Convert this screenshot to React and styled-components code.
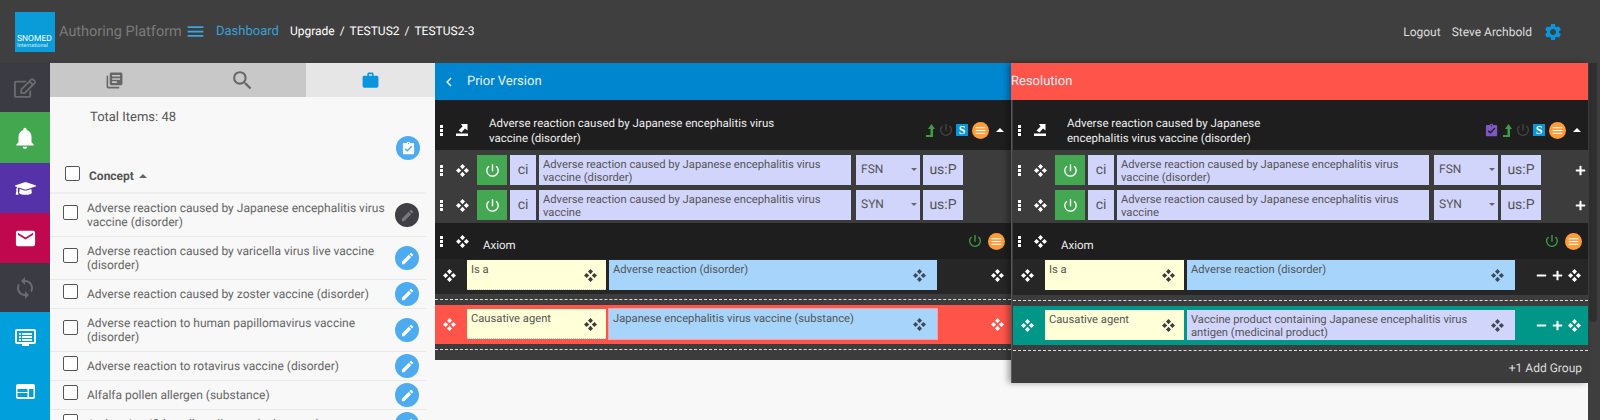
import React from "react";
import styled, { createGlobalStyle } from "styled-components";
import {
  MdAssignmentTurnedIn,
  MdCreate,
  MdEmail,
  MdLibraryBooks,
  MdMenu,
  MdNotifications,
  MdPowerSettingsNew,
  MdSearch,
  MdSettings,
  MdSync,
  MdWork,
  MdChevronLeft,
} from "react-icons/md";
import { FaGraduationCap, FaMinus, FaPlus, FaRegEdit } from "react-icons/fa";

const items = [
  { label: "Adverse reaction caused by Japanese encephalitis virus vaccine (disorder)", dark: true },
  { label: "Adverse reaction caused by varicella virus live vaccine (disorder)" },
  { label: "Adverse reaction caused by zoster vaccine (disorder)" },
  { label: "Adverse reaction to human papillomavirus vaccine (disorder)" },
  { label: "Adverse reaction to rotavirus vaccine (disorder)" },
  { label: "Alfalfa pollen allergen (substance)" },
  { label: "Ambrosia trifida pollen allergen (substance)" },
];

const railItems = [
  { bg: "#3b3b43", h: 49, icon: <FaRegEdit size={22} color="#6b6b70" /> },
  { bg: "#43a74f", h: 51, icon: <MdNotifications size={26} color="#fff" /> },
  { bg: "#5632a8", h: 50, icon: <FaGraduationCap size={21} color="#fff" /> },
  { bg: "#c0084f", h: 50, icon: <MdEmail size={23} color="#fff" /> },
  { bg: "#3b3b43", h: 49, icon: <MdSync size={24} color="#6b6b70" /> },
  { bg: "#029fdd", h: 51, icon: <ScreenIcon /> },
  { bg: "#029fdd", h: 57, icon: <WebIcon /> },
];

function ScreenIcon() {
  return (
    <svg width="21" height="18" viewBox="0 0 21 18">
      <path fill="#fff" d="M2 0h17a2 2 0 0 1 2 2v11a2 2 0 0 1-2 2h-5v2H7v-2H2a2 2 0 0 1-2-2V2a2 2 0 0 1 2-2z" />
      <path fill="#029fdd" d="M2 2h17v11H2zM2 2" />
      <path fill="#fff" d="M4 4h2v2H4zM7 4h10v2H7zM4 7h2v2H4zM7 7h10v2H7zM4 10h2v2H4zM7 10h10v2H7z" />
    </svg>
  );
}

function WebIcon() {
  return (
    <svg width="19" height="15" viewBox="0 0 19 15">
      <path fill="#fff" d="M2 0h15a2 2 0 0 1 2 2v11a2 2 0 0 1-2 2H2a2 2 0 0 1-2-2V2a2 2 0 0 1 2-2z" />
      <path fill="#029fdd" d="M1.500 5h10v3h-10zM1.500 9h10v4h-10zM13 5h4.500v8H13z" />
    </svg>
  );
}

function MoveIcon({ color = "#fff" }) {
  return (
    <svg width="13" height="13" viewBox="0 0 13 13" fill={color}>
      <path d="M6.500 0L9 2.600 6.500 5.200 4 2.600zM6.500 7.800L9 10.400 6.500 13 4 10.400zM2.600 4L5.200 6.500 2.600 9 0 6.500zM10.400 4L13 6.500 10.400 9 7.800 6.500z" />
    </svg>
  );
}

function JumpIcon() {
  return (
    <svg width="12" height="12" viewBox="0 0 12 12" fill="#fff">
      <path d="M0 9.500h12V12H0zM5 0h6.500v6.500L9 4.500 5.500 8.500 2.500 6.500l4-4z" />
    </svg>
  );
}

function UpArrow() {
  return (
    <svg width="9" height="13" viewBox="0 0 9 13" fill="#3f9c47">
      <path d="M5.500 0L9 5H7v8H0v-2h4.500V5H2z" />
    </svg>
  );
}

function Grip() {
  return (
    <Dots>
      <i />
      <i />
      <i />
    </Dots>
  );
}

function Description({ term, type, tail }) {
  return (
    <DescRow>
      <GripSlot>
        <Grip />
      </GripSlot>
      <MoveSlot>
        <MoveIcon />
      </MoveSlot>
      <PowerButton>
        <MdPowerSettingsNew size={17} />
      </PowerButton>
      <CaseBox>ci</CaseBox>
      <TermBox>{term}</TermBox>
      <TypeSelect>
        {type}
        <SelectCaret />
      </TypeSelect>
      <LangBox>us:P</LangBox>
      {tail && (
        <RowAdd>
          <FaPlus size={11} />
        </RowAdd>
      )}
    </DescRow>
  );
}

function Relationship({ type, value, lilac, tone, tall, editable }) {
  return (
    <RelRow $tone={tone} $tall={tall}>
      <RelMove>
        <MoveIcon />
      </RelMove>
      <AttrBox $dotted={!editable}>
        {type}
        <MoveIcon color="#3d3d3d" />
      </AttrBox>
      <ValueBox $lilac={lilac} $ringed={tone === "red"}>
        <span>{value}</span>
        <MoveIcon color="#3d4a57" />
      </ValueBox>
      <RelTail>
        {editable && <FaMinus size={11} />}
        {editable && <FaPlus size={11} />}
        <MoveIcon />
      </RelTail>
    </RelRow>
  );
}

function ComparePanel({ right }) {
  return (
    <Column $right={right}>
      <Banner $right={right}>
        {!right && <MdChevronLeft size={18} />}
        <span>{right ? "Resolution" : "Prior Version"}</span>
      </Banner>
      <Inner $right={right}>
        <ConceptRow>
          <GripSlot>
            <Grip />
          </GripSlot>
          <MoveSlot>
            <JumpIcon />
          </MoveSlot>
          <ConceptTitle $right={right}>
            Adverse reaction caused by Japanese encephalitis virus vaccine (disorder)
          </ConceptTitle>
          <ConceptTools>
            {right && (
              <ToolCell>
                <MdAssignmentTurnedIn size={15} color="#7e57c2" />
              </ToolCell>
            )}
            <ToolCell>
              <UpArrow />
            </ToolCell>
            <ToolCell>
              <MdPowerSettingsNew size={16} color="#444" />
            </ToolCell>
            <ToolCell>
              <SBadge>S</SBadge>
            </ToolCell>
            <OrangeCell>
              <OrangeDot>
                <MdMenu size={13} />
              </OrangeDot>
            </OrangeCell>
            <CaretCell>
              <UpCaret />
            </CaretCell>
          </ConceptTools>
        </ConceptRow>
        <DescArea>
          <Description
            term="Adverse reaction caused by Japanese encephalitis virus vaccine (disorder)"
            type="FSN"
            tail={right}
          />
          <Description term="Adverse reaction caused by Japanese encephalitis virus vaccine" type="SYN" tail={right} />
        </DescArea>
        <AxiomHead>
          <GripSlot>
            <Grip />
          </GripSlot>
          <MoveSlot>
            <MoveIcon />
          </MoveSlot>
          <AxiomLabel>Axiom</AxiomLabel>
          <AxiomTools>
            <MdPowerSettingsNew size={16} color="#3f9c47" />
            <OrangeDot>
              <MdMenu size={13} />
            </OrangeDot>
          </AxiomTools>
        </AxiomHead>
        <Relationship type="Is a" value="Adverse reaction (disorder)" tall={right} editable={right} />
        <Separator />
        {right ? (
          <Relationship
            type="Causative agent"
            value="Vaccine product containing Japanese encephalitis virus antigen (medicinal product)"
            lilac
            tone="teal"
            editable
          />
        ) : (
          <Relationship type="Causative agent" value="Japanese encephalitis virus vaccine (substance)" tone="red" />
        )}
        <Separator $end />
        {right && <AddGroup>+1 Add Group</AddGroup>}
      </Inner>
    </Column>
  );
}

export default function App() {
  return (
    <>
      <GlobalStyle />
      <Page>
        <TopBar>
          <Logo>
            <b>SNOMED</b>
            <small>International</small>
          </Logo>
          <Brand>Authoring Platform</Brand>
          <MdMenu size={21} color="#3aa5e0" />
          <DashLink>Dashboard</DashLink>
          <Crumbs>
            <span>Upgrade</span>
            <span>/</span>
            <span>TESTUS2</span>
            <span>/</span>
            <span>TESTUS2-3</span>
          </Crumbs>
          <UserArea>
            <span>Logout</span>
            <span>Steve Archbold</span>
            <MdSettings size={20} color="#0a96dc" />
          </UserArea>
        </TopBar>
        <Body>
          <Rail>
            {railItems.map((r, i) => (
              <RailItem key={i} $bg={r.bg} $h={r.h}>
                {r.icon}
              </RailItem>
            ))}
          </Rail>
          <SidePanel>
            <Tabs>
              <Tab>
                <MdLibraryBooks size={19} color="#666" />
              </Tab>
              <Tab>
                <MdSearch size={25} color="#666" />
              </Tab>
              <Tab $active>
                <MdWork size={19} color="#0a96dc" />
              </Tab>
            </Tabs>
            <TotalLine>Total Items: 48</TotalLine>
            <BatchRow>
              <RoundBtn>
                <MdAssignmentTurnedIn size={15} />
              </RoundBtn>
            </BatchRow>
            <ListHead>
              <Check />
              <HeadLabel>Concept</HeadLabel>
              <HeadCaret />
            </ListHead>
            {items.map((item) => (
              <ListRow key={item.label}>
                <RowCheck />
                <RowText>{item.label}</RowText>
                <RowBtn $dark={item.dark}>
                  <MdCreate size={15} />
                </RowBtn>
              </ListRow>
            ))}
          </SidePanel>
          <ComparePanel />
          <ComparePanel right />
          <ScrollTrack>
            <ScrollThumb />
          </ScrollTrack>
        </Body>
      </Page>
    </>
  );
}

//Styles
const GlobalStyle = createGlobalStyle`
  html, body {
    margin: 0;
    padding: 0;
    height: 420px;
    overflow: hidden;
    background: #f8f8f8;
    font-family: Roboto, "Noto Sans", sans-serif;
    text-rendering: geometricPrecision;
  }
  * {
    box-sizing: border-box;
  }
`;

const Page = styled.div`
  width: 1600px;
  height: 420px;
  overflow: hidden;
  display: flex;
  flex-direction: column;
`;

const TopBar = styled.header`
  height: 63px;
  flex: none;
  background: #3f3f3f;
  display: flex;
  align-items: center;
  padding-left: 15px;
  color: #fff;
  font-size: 12px;
`;

const Logo = styled.div`
  width: 40px;
  height: 40px;
  background: #0a9cd9;
  color: #fff;
  display: flex;
  flex-direction: column;
  justify-content: flex-end;
  padding: 0 0 3px 2px;
  line-height: 6px;
  b {
    font-weight: 400;
    font-size: 8.5px;
    line-height: 8px;
  }
  small {
    font-size: 5.5px;
    opacity: 0.8;
  }
`;

const Brand = styled.div`
  color: #7b7b7b;
  font-size: 14.5px;
  margin: 0 5px 0 4px;
  width: 121px;
  white-space: nowrap;
`;

const DashLink = styled.div`
  color: #3a9fd6;
  font-size: 13px;
  margin-left: 10px;
`;

const Crumbs = styled.div`
  display: flex;
  gap: 5px;
  margin-left: 11px;
  margin-bottom: 2px;
`;

const UserArea = styled.div`
  margin-left: auto;
  display: flex;
  align-items: center;
  gap: 11px;
  padding-right: 37px;
  color: #ddd;
`;

const Body = styled.div`
  flex: 1;
  min-height: 0;
  display: flex;
  align-items: flex-start;
`;

const Rail = styled.nav`
  width: 50px;
  flex: none;
`;

const RailItem = styled.div`
  height: ${(p) => p.$h}px;
  background: ${(p) => p.$bg};
  display: flex;
  align-items: center;
  justify-content: center;
`;

const SidePanel = styled.aside`
  width: 385px;
  flex: none;
  height: 357px;
  overflow: hidden;
  background: #f8f8f8;
`;

const Tabs = styled.div`
  display: flex;
  height: 34px;
`;

const Tab = styled.div`
  width: ${(p) => (p.$active ? "129px" : "128px")};
  background: ${(p) => (p.$active ? "#e6e6e6" : "#c8c8c8")};
  display: flex;
  align-items: center;
  justify-content: center;
`;

const TotalLine = styled.div`
  height: 39px;
  line-height: 42px;
  padding-left: 40px;
  font-size: 13px;
  color: #555;
`;

const BatchRow = styled.div`
  display: flex;
  justify-content: flex-end;
  padding-right: 15px;
`;

const RoundBtn = styled.div`
  width: 24px;
  height: 24px;
  flex: none;
  border-radius: 50%;
  background: ${(p) => (p.$dark ? "#3f3f45" : "#4dabf0")};
  color: ${(p) => (p.$dark ? "#77777c" : "#fff")};
  display: flex;
  align-items: center;
  justify-content: center;
`;

const RowBtn = styled(RoundBtn)`
  margin: -5px 0;
`;

const ListHead = styled.div`
  width: 376px;
  height: 34px;
  display: flex;
  align-items: center;
  padding: 0 0 5px 15px;
  border-bottom: 2px solid #eeeeee;
`;

const Check = styled.div`
  width: 15px;
  height: 15px;
  flex: none;
  background: #fff;
  border: 1px solid #555;
  border-radius: 2px;
`;

const HeadLabel = styled.div`
  font-size: 12px;
  font-weight: 700;
  color: #555;
  margin-left: 9px;
  padding-top: 5px;
`;

const HeadCaret = styled.div`
  margin: 5px 0 0 5px;
  border-left: 4px solid transparent;
  border-right: 4px solid transparent;
  border-bottom: 4px solid #666;
`;

const ListRow = styled.div`
  width: 376px;
  display: flex;
  align-items: center;
  padding: 7px 7px 7px 13px;
  border-bottom: 1px solid #e9e9e9;
`;

const RowCheck = styled(Check)`
  margin: -6px 0 -1px;
`;

const RowText = styled.div`
  flex: 1;
  margin: 0 3px 0 9px;
  font-size: 12px;
  line-height: 14px;
  color: #666;
`;

const Column = styled.section`
  width: ${(p) => (p.$right ? "577px" : "576px")};
  flex: none;
  position: relative;
  ${(p) => p.$right && "box-shadow: -3px 0 6px rgba(0, 0, 0, 0.35);"}
`;

const Banner = styled.div`
  height: 37px;
  background: ${(p) => (p.$right ? "#ff5449" : "#0086cf")};
  color: #e8f0f5;
  display: flex;
  align-items: center;
  gap: 9px;
  padding-left: ${(p) => (p.$right ? "0" : "5px")};
  font-size: 13px;
`;

const Inner = styled.div`
  background: #3c3c3c;
  ${(p) => p.$right && "border-left: 1px solid #5a5a5a; padding-left: 1px;"}
`;

const ConceptRow = styled.div`
  height: 50px;
  background: #1e1e1e;
  display: flex;
  align-items: center;
  padding-top: 10px;
  color: #eee;
  font-size: 11.5px;
`;

const GripSlot = styled.div`
  width: 12px;
  flex: none;
  display: flex;
  justify-content: center;
`;

const MoveSlot = styled.div`
  width: 30px;
  flex: none;
  display: flex;
  justify-content: center;
`;

const Dots = styled.div`
  display: flex;
  flex-direction: column;
  gap: 1px;
  i {
    display: block;
    width: 3px;
    height: 3px;
    background: #fff;
  }
`;

const ConceptTitle = styled.div`
  width: ${(p) => (p.$right ? "240px" : "296px")};
  margin-left: 12px;
  line-height: 15px;
  margin-top: 1px;
`;

const ConceptTools = styled.div`
  margin-left: auto;
  display: flex;
  align-items: center;
  padding-right: 1px;
`;

const ToolCell = styled.div`
  width: 16px;
  display: flex;
  justify-content: center;
  align-items: center;
`;

const OrangeCell = styled(ToolCell)`
  width: 20px;
`;

const CaretCell = styled(ToolCell)`
  width: 20px;
`;

const SBadge = styled.div`
  width: 12px;
  height: 12px;
  background: #0a96d8;
  color: #fff;
  font: 700 12px/12px "Liberation Serif", serif;
  text-align: center;
`;

const OrangeDot = styled.div`
  width: 17px;
  height: 17px;
  border-radius: 50%;
  background: #ff9c3a;
  color: #fff;
  display: flex;
  align-items: center;
  justify-content: center;
`;

const UpCaret = styled.div`
  border-left: 4px solid transparent;
  border-right: 4px solid transparent;
  border-bottom: 4px solid #fff;
`;

const DescArea = styled.div`
  padding: 5px 0 3px;
  display: flex;
  flex-direction: column;
  gap: 5px;
`;

const DescRow = styled.div`
  display: flex;
  align-items: center;
  height: 30px;
  color: #555;
  font-size: 11.2px;
`;

const PowerButton = styled.div`
  width: 30px;
  height: 30px;
  flex: none;
  background: #44a852;
  color: #fff;
  display: flex;
  align-items: center;
  justify-content: center;
`;

const CaseBox = styled.div`
  width: 26px;
  height: 30px;
  flex: none;
  margin-left: 3px;
  background: #d1d4fb;
  display: flex;
  align-items: center;
  justify-content: center;
  font-size: 14px;
`;

const TermBox = styled.div`
  width: 312px;
  height: 30px;
  flex: none;
  margin-left: 3px;
  background: #d1d4fb;
  padding: 3px 4px 0;
  line-height: 13px;
`;

const TypeSelect = styled.div`
  width: 64px;
  height: 30px;
  flex: none;
  margin-left: 5px;
  background: #d1d4fb;
  display: flex;
  align-items: center;
  justify-content: space-between;
  padding: 0 3px 2px 5px;
  font-size: 12px;
`;

const SelectCaret = styled.div`
  border-left: 3px solid transparent;
  border-right: 3px solid transparent;
  border-top: 3px solid #666;
`;

const LangBox = styled.div`
  width: 40px;
  height: 30px;
  flex: none;
  margin-left: 3px;
  background: #d1d4fb;
  display: flex;
  align-items: center;
  justify-content: center;
  font-size: 14px;
`;

const RowAdd = styled.div`
  margin-left: auto;
  padding-right: 2px;
  color: #fff;
  display: flex;
`;

const AxiomHead = styled.div`
  height: 36px;
  background: #1e1e1e;
  display: flex;
  align-items: center;
  color: #eee;
  font-size: 11.5px;
`;

const AxiomLabel = styled.div`
  margin-left: 6px;
  padding-top: 7px;
`;

const AxiomTools = styled.div`
  margin-left: auto;
  display: flex;
  align-items: center;
  gap: 5px;
  padding-right: 6px;
`;

const toneBg = { red: "#ff5449", teal: "#009688" };

const RelRow = styled.div`
  display: flex;
  align-items: center;
  height: ${(p) => (p.$tone ? 39 : p.$tall ? 36 : 35)}px;
  padding-bottom: ${(p) => (p.$tone ? 1 : p.$tall ? 4 : 3)}px;
  background: ${(p) => toneBg[p.$tone] || "#262626"};
  font-size: 11.2px;
  color: #555;
`;

const RelMove = styled.div`
  width: 32px;
  flex: none;
  padding-right: 4px;
  display: flex;
  justify-content: center;
`;

const AttrBox = styled.div`
  width: 139px;
  height: 30px;
  flex: none;
  background: #ffffd8;
  display: flex;
  justify-content: space-between;
  padding: 3px 9px 0 4px;
  line-height: 13px;
  ${(p) => p.$dotted && "border-bottom: 1px dotted #ccc;"}
  svg {
    align-self: center;
    margin-top: -2px;
  }
`;

const ValueBox = styled.div`
  width: 328px;
  height: 30px;
  flex: none;
  margin-left: 3px;
  background: ${(p) => (p.$lilac ? "#d1d4fb" : "#a6d4fb")};
  display: flex;
  justify-content: space-between;
  padding: 3px 11px 0 4px;
  line-height: 13px;
  ${(p) => p.$ringed && "box-shadow: 0 0 0 1px #f7a3a3;"}
  span {
    width: 295px;
  }
  svg {
    flex: none;
    align-self: center;
    margin-top: -2px;
  }
`;

const RelTail = styled.div`
  flex: 1;
  display: flex;
  align-items: center;
  justify-content: flex-end;
  gap: 5px;
  padding-right: 7px;
  color: #fff;
`;

const Separator = styled.div`
  height: ${(p) => (p.$end ? 16 : 11)}px;
  padding-top: 5px;
  &::before {
    content: "";
    display: block;
    border-top: 1px dashed #ddd;
  }
`;

const AddGroup = styled.div`
  height: 23px;
  margin-top: -1px;
  padding: 0 6px 4px 0;
  text-align: right;
  color: #ddd;
  font-size: 12px;
  line-height: 17px;
`;

const ScrollTrack = styled.div`
  width: 12px;
  height: 357px;
  flex: none;
  background: #3e3e3e;
`;

const ScrollThumb = styled.div`
  width: 8px;
  height: 259px;
  margin-left: 1px;
  background: #2f2f2f;
  border-radius: 0 0 4px 4px;
`;
